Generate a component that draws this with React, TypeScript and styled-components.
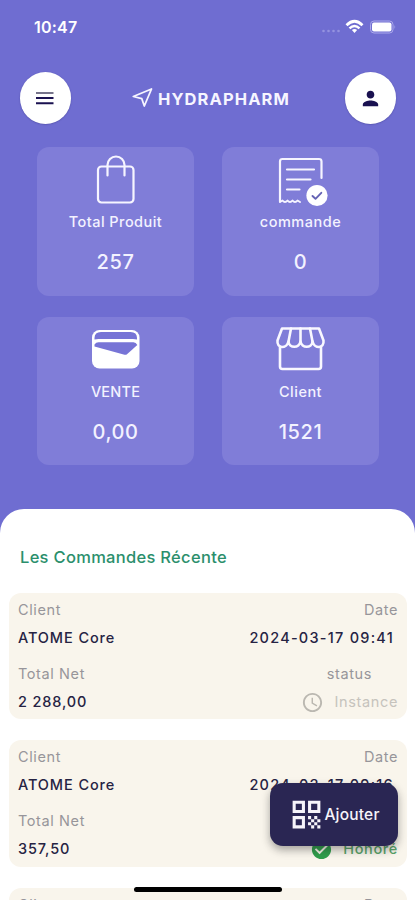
import React from "react";
import styled, { createGlobalStyle } from "styled-components";
import { MdAccessTime, MdCheckCircle, MdPerson, MdQrCode } from "react-icons/md";

const GlobalStyle = createGlobalStyle`
  * { box-sizing: border-box; }
  body { margin: 0; font-family: Inter, "Liberation Sans", sans-serif; background: #6f6dd1; }
`;

const Screen = styled.main`
  position: relative;
  width: 415px;
  height: 900px;
  overflow: hidden;
  display: flex;
  flex-direction: column;
  background: #6f6dd1;
`;

const StatusBar = styled.div`
  height: 54px;
  flex: none;
  display: flex;
  align-items: center;
  justify-content: space-between;
  padding: 0 18px 0 34px;
  color: #fff;
`;

const Clock = styled.span`
  font-size: 16px;
  font-weight: 600;
  letter-spacing: 0.2px;
`;

const Indicators = styled.div`
  display: flex;
  align-items: center;
  svg { display: block; }
`;

const Header = styled.header`
  flex: none;
  display: flex;
  align-items: center;
  justify-content: space-between;
  height: 52px;
  margin: 18px 18.5px 0 19.5px;
`;

const RoundButton = styled.button`
  width: 51.5px;
  height: 51.5px;
  border: 0;
  padding: 0;
  border-radius: 50%;
  background: #fff;
  color: #1a1150;
  display: flex;
  align-items: center;
  justify-content: center;
  box-shadow: 0 0.5px 1.5px rgba(40, 38, 110, 0.45);
`;

const Brand = styled.h1`
  margin: 0 0 0 6px;
  padding-top: 1px;
  display: flex;
  align-items: center;
  gap: 5px;
  color: #f6f5ff;
  font-size: 16.5px;
  font-weight: 700;
  line-height: 22px;
  letter-spacing: 1.1px;
`;

const StatGrid = styled.section`
  flex: none;
  display: grid;
  grid-template-columns: 157px 157px;
  grid-auto-rows: 148.5px;
  gap: 21px 28px;
  margin: 23px 0 0 37px;
`;

const StatCard = styled.article`
  display: flex;
  flex-direction: column;
  align-items: center;
  border-radius: 12px;
  background: #807dd8;
  color: #f3f2ff;
  padding-top: 4px;
`;

const StatIcon = styled.div`
  height: 60px;
  svg { display: block; }
`;

const StatLabel = styled.span`
  margin-top: 1px;
  font-size: 14.5px;
  font-weight: 500;
  line-height: 20px;
  letter-spacing: ${(p: { $spacing: number }) => p.$spacing}px;
`;

const StatValue = styled.span`
  margin-top: 16px;
  font-size: 20px;
  font-weight: 500;
  line-height: 28px;
  letter-spacing: 0.6px;
`;

const Sheet = styled.section`
  flex: 1;
  min-height: 0;
  margin-top: 44px;
  padding: 0 8px 0 9px;
  border-radius: 24px 24px 0 0;
  background: #fff;
  overflow: hidden;
`;

const SheetTitle = styled.h2`
  margin: 36px 0 0 11px;
  font-size: 16.5px;
  font-weight: 500;
  line-height: 24px;
  letter-spacing: 0.3px;
  color: #2b8f6c;
`;

const OrderList = styled.div`
  display: flex;
  flex-direction: column;
  gap: 21px;
  margin-top: 24px;
`;

const OrderCard = styled.article`
  height: 126.3px;
  flex: none;
  border-radius: 12px;
  background: #f9f5ec;
  padding: 7px 9px 0;
  display: flex;
  justify-content: space-between;
`;

const Column = styled.div`
  display: flex;
  flex-direction: column;
`;

const RightColumn = styled(Column)`
  align-items: flex-end;
`;

const FieldLabel = styled.span`
  font-size: 14.5px;
  line-height: 20px;
  letter-spacing: 0.6px;
  color: #97959a;
`;

const StatusLabel = styled(FieldLabel)`
  margin-right: 26px;
`;

const FieldValue = styled.span`
  margin: 8px 0 16px;
  font-size: 14.5px;
  font-weight: 500;
  line-height: 20px;
  letter-spacing: 0.9px;
  color: #262343;
`;

const Amount = styled(FieldValue)`
  letter-spacing: 0.85px;
`;

const DateValue = styled(FieldValue)`
  margin-right: 4px;
  letter-spacing: 1.25px;
`;

const Status = styled.span<{ $done: boolean }>`
  margin-top: 8px;
  height: 20px;
  display: flex;
  align-items: center;
  gap: 10px;
  font-size: 14.5px;
  line-height: 20px;
  letter-spacing: 0.65px;
  font-weight: ${(p) => (p.$done ? 500 : 400)};
  color: ${(p) => (p.$done ? "#58a368" : "#c6c3bd")};
  svg { color: ${(p) => (p.$done ? "#2f9e4b" : "#bbb8b1")}; }
`;

const AddButton = styled.button`
  position: absolute;
  left: 270px;
  top: 783px;
  width: 128px;
  height: 63px;
  border: 0;
  padding: 0;
  border-radius: 13px;
  background: #2a2653;
  color: #f6f4fa;
  display: flex;
  align-items: center;
  justify-content: center;
  font-family: inherit;
  font-size: 15.5px;
  font-weight: 500;
  letter-spacing: 0.2px;
  box-shadow: 0 4px 8px rgba(30, 30, 30, 0.38);
  svg { margin-right: -1px; }
`;

const HomeIndicator = styled.div`
  position: absolute;
  left: 134px;
  top: 886.5px;
  width: 148px;
  height: 5px;
  border-radius: 3px;
  background: #000;
`;

const BagIcon = () => (
  <svg width="60" height="60" viewBox="0 0 60 60" fill="none" stroke="#f6f5ff" strokeWidth="2.2" strokeLinecap="round">
    <rect x="12" y="15.500" width="35.500" height="36" rx="3.500" />
    <path d="M21.500 24.500V14a8.500 8.500 0 0 1 17 0V24.500" />
  </svg>
);

const ReceiptIcon = () => (
  <svg width="60" height="60" viewBox="0 0 60 60" fill="none" stroke="#f6f5ff" strokeWidth="2.2" strokeLinecap="round" strokeLinejoin="round">
    <path d="M50.500 27V10.500Q50.500 8 48 8H11.500Q9 8 9 10.500V50.500" />
    <path d="M9 51L11.500 49.500Q14 52.500 16.500 49.500Q19 52.500 21.500 49.500Q24 52.500 26.500 49.500L29 51" strokeWidth="1.900" />
    <path d="M16 18.500H43M16 28.500H39.500M16 38.500H28.500" />
    <circle cx="46" cy="44.500" r="10.600" fill="#fff" stroke="none" />
    <path d="M41.500 45l3 2.800 5.800-6" stroke="#6563b4" strokeWidth="1.900" />
  </svg>
);

const WalletIcon = () => (
  <svg width="60" height="60" viewBox="0 0 60 60" fill="none">
    <rect x="6" y="9" width="47.500" height="38.500" rx="7.500" fill="#fff" />
    <path d="M8.500 18.500V17Q8.500 11 15 11H44.500Q51 11 51 17V18.500Q49 18 47 18H12.500Q10.500 18 8.500 18.500Z" fill="#7774d6" />
    <path d="M8.500 25.500V23.500Q10 21.300 12.500 21.300H47.500Q50 21.300 51.300 24L41 33.200Q40 34 38.500 33.700Z" fill="#7774d6" />
  </svg>
);

const StoreIcon = () => (
  <svg width="60" height="60" viewBox="0 0 60 60" fill="none" stroke="#f9f8ff" strokeWidth="2.600" strokeLinecap="round" strokeLinejoin="round">
    <path d="M9 26V45.500Q9 48 11.500 48H47.500Q50 48 50 45.500V26" />
    <path d="M11 7.500H48L52.500 19.500C53.500 28 43.500 28 41.500 20.500C41 27.500 30.500 27.500 29.500 20.500C28.500 27.500 18 27.500 17.500 20.500C15.500 28 5.500 28 6.500 19.500Z" />
    <path d="M20 7.500L17.500 20.500M29.500 7.500V20.500M39 7.500L41.500 20.500" />
  </svg>
);

const stats = [
  { label: "Total Produit", value: "257", spacing: 0.45, icon: <BagIcon /> },
  { label: "commande", value: "0", spacing: 0.5, icon: <ReceiptIcon /> },
  { label: "VENTE", value: "0,00", spacing: 0.2, icon: <WalletIcon /> },
  { label: "Client", value: "1521", spacing: 0.5, icon: <StoreIcon /> },
];

const orders = [
  { client: "ATOME Core", date: "2024-03-17 09:41", total: "2 288,00", done: false },
  { client: "ATOME Core", date: "2024-03-17 09:16", total: "357,50", done: true },
  { client: "ATOME Core", date: "2024-03-17 09:02", total: "120,00", done: true },
];

export default function App() {
  return (
    <>
      <GlobalStyle />
      <Screen>
        <StatusBar>
          <Clock>10:47</Clock>
          <Indicators>
            <svg width="76" height="18" viewBox="0 0 76 18" fill="none">
              <g fill="#9492e0">
                <circle cx="2.500" cy="13" r="1.300" />
                <circle cx="7.500" cy="13" r="1.300" />
                <circle cx="12.500" cy="13" r="1.300" />
                <circle cx="17.500" cy="13" r="1.300" />
              </g>
              <g transform="translate(-0.500 0)">
                <path d="M26 7.200Q34 -0.800 42 7.200" stroke="#fff" strokeWidth="2.700" />
                <path d="M29 10.400Q34 5.500 39 10.400" stroke="#fff" strokeWidth="2.500" />
                <path d="M31.400 12Q34 9.900 36.600 12L34 14.900Z" fill="#fff" />
              </g>
              <rect x="49.500" y="3" width="22.500" height="12" rx="3.500" stroke="#aba9ec" />
              <rect x="51" y="4.500" width="19.500" height="9" rx="2" fill="#fff" />
              <path d="M73.500 7Q75 9 73.500 11Z" fill="#aba9ec" />
            </svg>
          </Indicators>
        </StatusBar>
        <Header>
          <RoundButton aria-label="Menu">
            <svg width="20" height="16" viewBox="0 0 20 16" strokeWidth="2">
              <path d="M1 3H18.500" stroke="#77758b" />
              <path d="M1 8H18.500M1 13.200H18.500" stroke="#1a1150" />
            </svg>
          </RoundButton>
          <Brand>
            <svg width="21" height="21" viewBox="0 0 21 21" fill="none" stroke="#f6f5ff" strokeWidth="1.800" strokeLinejoin="round">
              <path d="M1.300 8.500L19.500 1L12.300 18L9.800 10.700Z" />
            </svg>
            <span>HYDRAPHARM</span>
          </Brand>
          <RoundButton aria-label="Profil">
            <MdPerson size={23} />
          </RoundButton>
        </Header>
        <StatGrid>
          {stats.map((s) => (
            <StatCard key={s.label}>
              <StatIcon>{s.icon}</StatIcon>
              <StatLabel $spacing={s.spacing}>{s.label}</StatLabel>
              <StatValue>{s.value}</StatValue>
            </StatCard>
          ))}
        </StatGrid>
        <Sheet>
          <SheetTitle>Les Commandes Récente</SheetTitle>
          <OrderList>
            {orders.map((o) => (
              <OrderCard key={o.date}>
                <Column>
                  <FieldLabel>Client</FieldLabel>
                  <FieldValue>{o.client}</FieldValue>
                  <FieldLabel>Total Net</FieldLabel>
                  <Amount>{o.total}</Amount>
                </Column>
                <RightColumn>
                  <FieldLabel>Date</FieldLabel>
                  <DateValue>{o.date}</DateValue>
                  <StatusLabel>status</StatusLabel>
                  <Status $done={o.done}>
                    {o.done ? <MdCheckCircle size={23} /> : <MdAccessTime size={23} />}
                    {o.done ? "Honoré" : "Instance"}
                  </Status>
                </RightColumn>
              </OrderCard>
            ))}
          </OrderList>
        </Sheet>
        <AddButton>
          <MdQrCode size={37} />
          Ajouter
        </AddButton>
        <HomeIndicator />
      </Screen>
    </>
  );
}
